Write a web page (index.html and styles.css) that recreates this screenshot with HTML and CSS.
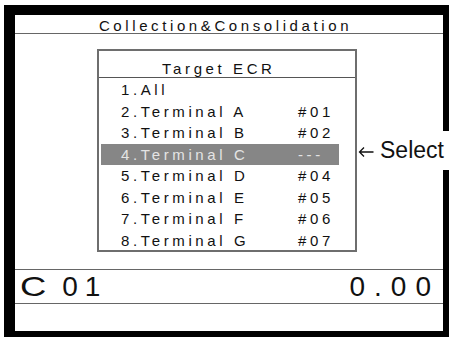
FILE: index.html
```html
<!DOCTYPE html>
<html lang="en">
<head>
    <meta charset="UTF-8">
    <title>Collection&amp;Consolidation</title>
    <link rel="stylesheet" href="styles.css">
</head>
<body>

    <div class="screen">
        <div class="title">Collection&amp;Consolidation</div>

        <div class="content">
            <div class="menu">
                <div class="menu-head">Target ECR</div>
                <ul class="menu-list">
                    <li><span>1.All</span></li>
                    <li><span>2.Terminal A</span><span>#01</span></li>
                    <li><span>3.Terminal B</span><span>#02</span></li>
                    <li class="selected"><span>4.Terminal C</span><span>---</span></li>
                    <li><span>5.Terminal D</span><span>#04</span></li>
                    <li><span>6.Terminal E</span><span>#05</span></li>
                    <li><span>7.Terminal F</span><span>#06</span></li>
                    <li><span>8.Terminal G</span><span>#07</span></li>
                </ul>
            </div>
        </div>

        <div class="amount-row">
            <span class="clerk">C</span><span class="clerk-no">01</span>
            <span class="amount">0.00</span>
        </div>
        <div class="footer"></div>
    </div>

    <!-- callout next to the highlighted row -->
    <div class="hint">
        <svg class="hint-arrow" width="16" height="12" viewBox="0 0 16 12">
            <path d="M15.5 6H1.5M6 1.5L1.5 6L6 10.5" fill="none" stroke="#111" stroke-width="1.3"/>
        </svg>
        <span>Select</span>
    </div>

</body>
</html>
```

FILE: styles.css
```css
body {
    margin: 0;
    background-color: #fff;
    font-family: 'Liberation Sans', Arial, sans-serif;
    color: #111;
}
.screen {
    box-sizing: border-box;
    width: 445px;
    height: 332px;
    margin: 5px 0 0 4px;
    border-style: solid;
    border-color: #000;
    border-width: 10px 6px 6px 11px;
    display: flex;
    flex-direction: column;
}
.title {
    height: 15px;
    padding: 3px 7px 0 0;
    line-height: 16px;
    font-size: 15px;
    letter-spacing: 3.6px;
    text-align: center;
    border-bottom: 1px solid #666;
}
.content {
    box-sizing: border-box;
    height: 235px;
    padding: 15px 0 0 82px;
}
.menu {
    box-sizing: border-box;
    width: 260px;
    height: 203px;
    border: 2px solid #6e6e6e;
    font-size: 15px;
    letter-spacing: 3.6px;
}
.menu-head {
    height: 17px;
    padding: 9px 0 0 63px;
    line-height: 18px;
    border-bottom: 1px solid #555;
}
.menu-list {
    list-style: none;
    margin: 0 16px 0 2px;
    padding: 1px 0 0 0;
}
.menu-list li {
    display: grid;
    grid-template-columns: 177px 1fr;
    height: 21.5px;
    line-height: 21.5px;
    padding-left: 20px;
}
.menu-list li.selected {
    background-color: #868686;
    color: #e4e4e4;
}
.amount-row {
    display: flex;
    align-items: center;
    height: 33px;
    padding: 0 3px 0 5px;
    border-top: 1px solid #666;
    border-bottom: 1px solid #666;
    font-size: 28px;
    line-height: 33px;
}
.clerk {
    display: inline-block;
    transform: scaleX(1.3);
    transform-origin: left center;
    margin-right: 22px;
}
.clerk-no {
    letter-spacing: 7px;
}
.amount {
    margin-left: auto;
    letter-spacing: 9px;
}
.footer {
    flex: 1;
}
.hint {
    position: absolute;
    left: 358px;
    top: 131px;
    width: 91px;
    height: 39px;
    display: flex;
    align-items: center;
    gap: 6px;
    background-color: #fff;
    font-size: 23px;
    white-space: nowrap;
}
.hint-arrow {
    flex-shrink: 0;
    margin-top: 2px;
}
```
